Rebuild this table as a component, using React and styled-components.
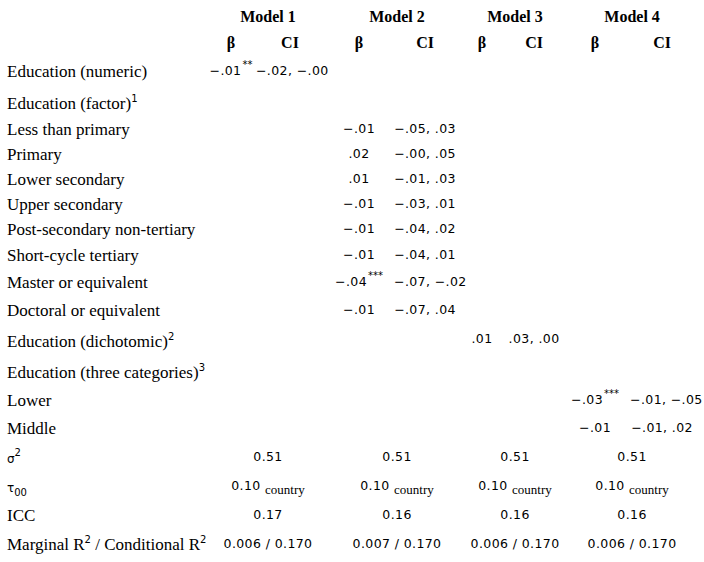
import styled, { createGlobalStyle } from "styled-components";

const GlobalStyle = createGlobalStyle`
  body {
    margin: 0;
    background: #ffffff;
    color: #000000;
  }
`;

const Table = styled.table`
  border-collapse: collapse;
  table-layout: fixed;
  width: 694px;
  margin-top: 4px;
  font-family: "Liberation Serif", serif;
  font-size: 17px;
`;

const Row = styled.tr`
  height: ${(p) => p.$h}px;
`;

const Label = styled.td`
  padding: ${(p) => (p.$sup ? "3px" : "0")} 0 0 7px;
  vertical-align: middle;
  white-space: nowrap;
  line-height: 1;
`;

const Head = styled.th`
  padding: 0 0 0 ${(p) => p.$shift || 0}px;
  font-weight: bold;
  font-size: 16px;
  text-align: center;
  vertical-align: middle;
  line-height: 1;
`;

const Value = styled.td`
  padding: 0 0 0 ${(p) => p.$shift || 0}px;
  text-align: center;
  vertical-align: middle;
  white-space: nowrap;
  font-family: "DejaVu Sans", sans-serif;
  font-size: 12.5px;
  letter-spacing: 0.4px;
  line-height: 1;
`;

const Sup = styled.sup`
  font-family: "DejaVu Sans", sans-serif;
  font-size: 10px;
  line-height: 0;
  vertical-align: 7px;
  letter-spacing: 0;
`;

const Stars = styled.sup`
  font-size: 10px;
  line-height: 0;
  vertical-align: 7px;
  letter-spacing: 0;
  margin-left: 1px;
`;

const Sub = styled.sub`
  font-family: ${(p) => (p.$serif ? '"Liberation Serif", serif' : '"DejaVu Sans", sans-serif')};
  font-size: ${(p) => (p.$serif ? 13 : 10)}px;
  line-height: 0;
  vertical-align: -4px;
  letter-spacing: 0;
`;

const Greek = styled.span`
  font-family: "DejaVu Sans", sans-serif;
  font-size: 12px;
`;

const MINUS = "\u2212";
const fmt = (s) => (s ? s.replace(/-/g, MINUS) : s);

// [label, sup, height, [b1, ci1, b2, ci2, b3, ci3, b4, ci4]]
const rows = [
  ["Education (numeric)", null, 31, ["-.01|**", "-.02, -.00", "", "", "", "", "", ""]],
  ["Education (factor)", "1", 30, ["", "", "", "", "", "", "", ""]],
  ["Less than primary", null, 25, ["", "", "-.01", "-.05, .03", "", "", "", ""]],
  ["Primary", null, 25, ["", "", ".02", "-.00, .05", "", "", "", ""]],
  ["Lower secondary", null, 25, ["", "", ".01", "-.01, .03", "", "", "", ""]],
  ["Upper secondary", null, 25, ["", "", "-.01", "-.03, .01", "", "", "", ""]],
  ["Post-secondary non-tertiary", null, 25, ["", "", "-.01", "-.04, .02", "", "", "", ""]],
  ["Short-cycle tertiary", null, 26, ["", "", "-.01", "-.04, .01", "", "", "", ""]],
  ["Master or equivalent", null, 28, ["", "", "-.04|***", "-.07, -.02", "", "", "", ""]],
  ["Doctoral or equivalent", null, 28, ["", "", "-.01", "-.07, .04", "", "", "", ""]],
  ["Education (dichotomic)", "2", 31, ["", "", "", "", ".01", ".03, .00", "", ""]],
  ["Education (three categories)", "3", 31, ["", "", "", "", "", "", "", ""]],
  ["Lower", null, 28, ["", "", "", "", "", "", "-.03|***", "-.01, -.05"]],
  ["Middle", null, 29, ["", "", "", "", "", "", "-.01", "-.01, .02"]],
];

const shifts = [3, 7, 7, 5];

function Coef({ text }) {
  if (!text) return null;
  const [num, stars] = text.split("|");
  return (
    <>
      {fmt(num)}
      {stars && <Stars>{stars}</Stars>}
    </>
  );
}

function StatRow({ label, h, values, render }) {
  return (
    <Row $h={h}>
      <Label>{label}</Label>
      {values.map((v, i) => (
        <Value key={i} colSpan={2} $shift={shifts[i] * 2}>
          {render ? render(v) : v}
        </Value>
      ))}
    </Row>
  );
}

export default function App() {
  return (
    <>
      <GlobalStyle />
      <Table>
        <colgroup>
          <col style={{ width: 206 }} />
          <col style={{ width: 50 }} />
          <col style={{ width: 68 }} />
          <col style={{ width: 70 }} />
          <col style={{ width: 62 }} />
          <col style={{ width: 52 }} />
          <col style={{ width: 52 }} />
          <col style={{ width: 70 }} />
          <col style={{ width: 64 }} />
        </colgroup>
        <thead>
          <Row $h={26}>
            <Head />
            {[1, 2, 3, 4].map((m, i) => (
              <Head key={m} colSpan={2} $shift={shifts[i] * 2}>
                Model {m}
              </Head>
            ))}
          </Row>
          <Row $h={26}>
            <Head />
            {[1, 2, 3, 4].flatMap((m) => [
              <Head key={`b${m}`}>β</Head>,
              <Head key={`c${m}`}>CI</Head>,
            ])}
          </Row>
        </thead>
        <tbody>
          {rows.map(([label, sup, h, cells]) => (
            <Row key={label} $h={h}>
              <Label $sup={!!sup}>
                {label}
                {sup && <Sup>{sup}</Sup>}
              </Label>
              {cells.map((c, i) => (
                <Value key={i}>
                  <Coef text={c} />
                </Value>
              ))}
            </Row>
          ))}
          <StatRow
            h={29}
            label={
              <>
                <Greek>σ</Greek>
                <Sup>2</Sup>
              </>
            }
            values={["0.51", "0.51", "0.51", "0.51"]}
          />
          <StatRow
            h={29}
            label={
              <>
                <Greek>τ</Greek>
                <Sub>00</Sub>
              </>
            }
            values={["0.10", "0.10", "0.10", "0.10"]}
            render={(v) => (
              <>
                {v} <Sub $serif>country</Sub>
              </>
            )}
          />
          <StatRow h={29} label="ICC" values={["0.17", "0.16", "0.16", "0.16"]} />
          <StatRow
            h={28}
            label={
              <>
                Marginal R<Sup>2</Sup> / Conditional R<Sup>2</Sup>
              </>
            }
            values={["0.006 / 0.170", "0.007 / 0.170", "0.006 / 0.170", "0.006 / 0.170"]}
          />
        </tbody>
      </Table>
    </>
  );
}
